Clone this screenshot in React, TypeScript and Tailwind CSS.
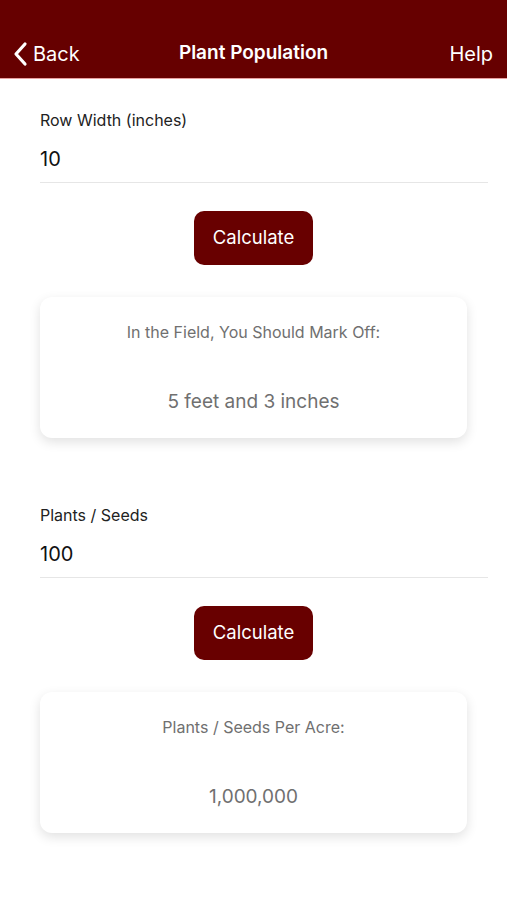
import React from 'react';

const font = { fontFamily: 'Inter, "Noto Sans", sans-serif' };

function Section({ label, value, title, result }: { label: string; value: string; title: string; result: string }) {
  return (
    <div className="flex flex-col">
      <div className="px-10">
        <div className="h-[24px] flex items-center text-[16px] text-[#222]">{label}</div>
        <div className="mt-[13px] h-[28px] flex items-center text-[20px] text-[#111]">{value}</div>
        <div className="mt-[9px] h-px bg-[#e6e6e6] mr-[-21px]" />
      </div>
      <div className="flex justify-center mt-[28px]">
        <button className="w-[119px] h-[54px] rounded-[10px] bg-[#680000] text-white text-[18.5px]">Calculate</button>
      </div>
      <div className="mx-10 mt-[32px] h-[141px] rounded-xl bg-white shadow-[0_4px_12px_rgba(0,0,0,0.12)] flex flex-col items-center">
        <div className="mt-[24px] h-[22px] flex items-center text-[16px] text-[#707070]">{title}</div>
        <div className="mt-[46px] h-[26px] flex items-center text-[19px] text-[#707070]">{result}</div>
      </div>
    </div>
  );
}

export default function App() {
  return (
    <div className="w-[507px] h-[900px] bg-white overflow-hidden" style={font}>
      <header className="h-[79px] bg-[#660000] border-b border-[#e8a0a0] pt-[29px] flex items-center justify-between px-3 relative">
        <div className="flex items-center gap-1 text-white text-[20px]">
          <svg width="17" height="26" viewBox="0 0 17 26" fill="none">
            <path d="M13 3L4 13L13 23" stroke="white" strokeWidth="3.2" strokeLinecap="round" strokeLinejoin="round" />
          </svg>
          <span>Back</span>
        </div>
        <div className="absolute left-0 right-0 top-[29px] bottom-0 flex items-center justify-center pointer-events-none">
          <span className="text-white text-[19px] font-semibold">Plant Population</span>
        </div>
        <span className="text-white text-[20px] pr-[2px]">Help</span>
      </header>
      <div className="pt-[29px]">
        <Section
          label="Row Width (inches)"
          value="10"
          title="In the Field, You Should Mark Off:"
          result="5 feet and 3 inches"
        />
      </div>
      <div className="pt-[65px]">
        <Section label="Plants / Seeds" value="100" title="Plants / Seeds Per Acre:" result="1,000,000" />
      </div>
    </div>
  );
}
